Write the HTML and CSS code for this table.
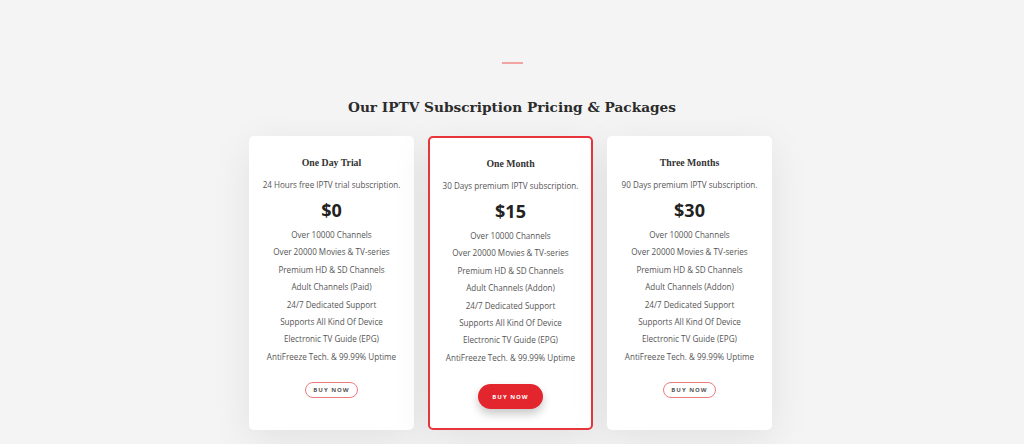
FILE: index.html
```html
<!DOCTYPE html>
<html lang="en">
<head>
<meta charset="utf-8">
<title>Our IPTV Subscription Pricing &amp; Packages</title>
<link rel="stylesheet" href="styles.css">
</head>
<body>
<section class="pricing">
  <div class="divider"></div>
  <h2 class="heading">Our IPTV Subscription Pricing &amp; Packages</h2>
  <div class="plans">
    <div class="card">
      <h3 class="plan-name">One Day Trial</h3>
      <p class="plan-desc">24 Hours free IPTV trial subscription.</p>
      <div class="price">$0</div>
      <ul class="features">
        <li>Over 10000 Channels</li>
        <li>Over 20000 Movies &amp; TV-series</li>
        <li>Premium HD &amp; SD Channels</li>
        <li>Adult Channels (Paid)</li>
        <li>24/7 Dedicated Support</li>
        <li>Supports All Kind Of Device</li>
        <li>Electronic TV Guide (EPG)</li>
        <li>AntiFreeze Tech. &amp; 99.99% Uptime</li>
      </ul>
      <a class="btn btn-outline" href="#">BUY NOW</a>
    </div>
    <div class="card card-featured">
      <h3 class="plan-name">One Month</h3>
      <p class="plan-desc">30 Days premium IPTV subscription.</p>
      <div class="price">$15</div>
      <ul class="features">
        <li>Over 10000 Channels</li>
        <li>Over 20000 Movies &amp; TV-series</li>
        <li>Premium HD &amp; SD Channels</li>
        <li>Adult Channels (Addon)</li>
        <li>24/7 Dedicated Support</li>
        <li>Supports All Kind Of Device</li>
        <li>Electronic TV Guide (EPG)</li>
        <li>AntiFreeze Tech. &amp; 99.99% Uptime</li>
      </ul>
      <a class="btn btn-solid" href="#">BUY NOW</a>
    </div>
    <div class="card">
      <h3 class="plan-name">Three Months</h3>
      <p class="plan-desc">90 Days premium IPTV subscription.</p>
      <div class="price">$30</div>
      <ul class="features">
        <li>Over 10000 Channels</li>
        <li>Over 20000 Movies &amp; TV-series</li>
        <li>Premium HD &amp; SD Channels</li>
        <li>Adult Channels (Addon)</li>
        <li>24/7 Dedicated Support</li>
        <li>Supports All Kind Of Device</li>
        <li>Electronic TV Guide (EPG)</li>
        <li>AntiFreeze Tech. &amp; 99.99% Uptime</li>
      </ul>
      <a class="btn btn-outline" href="#">BUY NOW</a>
    </div>
  </div>
</section>
</body>
</html>
```

FILE: styles.css
```css
* { box-sizing: border-box; }

html, body {
  margin: 0;
  padding: 0;
  background: #f4f4f4;
  height: 100%;
  overflow: hidden;
}

body {
  font-family: "Open Sans", "Noto Sans", sans-serif;
  color: #555;
}

.pricing {
  display: flex;
  flex-direction: column;
  align-items: center;
  padding-top: 62px;
}

.divider {
  width: 21px;
  height: 2px;
  background: #f2a3a3;
}

.heading {
  margin: 33px 0 0;
  font-family: "DejaVu Serif", serif;
  font-weight: 700;
  font-size: 13.7px;
  line-height: 20px;
  color: #2b2b2b;
  text-align: center;
}

.plans {
  margin-top: 19px;
  padding-right: 3px;
  display: grid;
  grid-template-columns: repeat(3, 165px);
  column-gap: 14px;
  justify-content: center;
}

.card {
  background: #fff;
  border-radius: 5px;
  padding: 20px 6px 21px;
  text-align: center;
  display: flex;
  flex-direction: column;
  align-items: center;
  box-shadow: 0 10px 40px rgba(0, 0, 0, 0.08);
}

.card-featured {
  border: 2px solid #e8343b;
  padding-top: 19px;
  padding-bottom: 19px;
}

.plan-name {
  margin: 0;
  font-family: "Liberation Serif", serif;
  font-weight: 700;
  font-size: 9.8px;
  line-height: 14px;
  color: #333;
}

.plan-desc {
  margin: 8px 0 0;
  font-size: 8.1px;
  line-height: 14px;
  color: #555;
}

.price {
  margin-top: 5px;
  font-size: 18px;
  font-weight: 700;
  line-height: 26px;
  color: #222;
}

.features {
  list-style: none;
  margin: 3px 0 0;
  padding: 0;
  font-size: 8.1px;
  line-height: 17.4px;
  color: #555;
}

.btn {
  display: inline-flex;
  align-items: center;
  justify-content: center;
  text-decoration: none;
  font-weight: 700;
  font-size: 6px;
  letter-spacing: 1px;
  border-radius: 999px;
}

.btn-outline {
  margin-top: 17px;
  width: 53px;
  height: 16px;
  border: 1px solid #ec7b7e;
  color: #555;
}

.btn-solid {
  margin-top: 18px;
  width: 65px;
  height: 25px;
  background: #e3262e;
  color: #fff;
  box-shadow: 0 5px 10px rgba(0, 0, 0, 0.22);
}
```
